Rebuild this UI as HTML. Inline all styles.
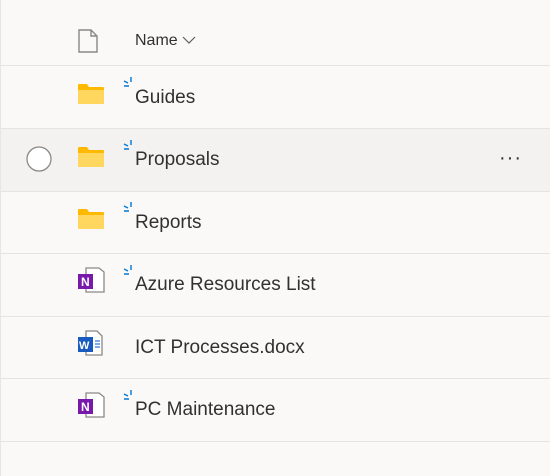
<!DOCTYPE html>
<html><head><style>
html,body{margin:0;padding:0;}
body{width:550px;height:476px;background:#faf9f8;font-family:"Liberation Sans",sans-serif;color:#323130;position:relative;overflow:hidden;border-left:1px solid #e8e6e4;box-sizing:border-box;}
.row{position:absolute;left:0;width:550px;height:62px;border-bottom:1px solid #e6e4e2;}
.t{position:absolute;left:134px;font-size:19px;line-height:20px;}
.ic{position:absolute;left:76px;}
.sp{position:absolute;left:122px;}
</style></head><body>
<div class="row" style="top:0;height:65px;">
 <svg class="ic" style="left:77px;top:29px" width="20" height="24" viewBox="0 0 20 24"><path d="M1 1H13L19 7V23H1Z M13 1V7H19" fill="none" stroke="#8a8886" stroke-width="1.4"/></svg>
 <div class="t" style="top:31px;font-size:16px;">Name <svg width="14" height="10" viewBox="0 0 14 10"><path d="M1 2L7 8L13 2" fill="none" stroke="#605e5c" stroke-width="1.2"/></svg></div>
</div>
<div class="row" style="top:66px;"></div>
<div class="row" style="top:129px;background:#f3f2f1;"></div>
<div class="row" style="top:191px;"></div>
<div class="row" style="top:254px;"></div>
<div class="row" style="top:316px;"></div>
<div class="row" style="top:379px;"></div>

<svg style="position:absolute;left:25px;top:146px" width="26" height="26"><circle cx="13" cy="13" r="12" fill="#fff" stroke="#8a8886" stroke-width="1.3"/></svg>
<div style="position:absolute;left:498px;top:147px;font-size:20px;letter-spacing:1px;">···</div>

<!-- folders -->
<svg class="ic" style="top:83px" width="28" height="22" viewBox="0 0 28 22"><path d="M1 2Q1 1 2 1H10L12 4H26Q27 4 27 5V20Q27 21 26 21H2Q1 21 1 20Z" fill="#ffb900"/><path d="M1 7H27V20Q27 21 26 21H2Q1 21 1 20Z" fill="#ffd75e"/></svg>
<svg class="ic" style="top:146px" width="28" height="22" viewBox="0 0 28 22"><path d="M1 2Q1 1 2 1H10L12 4H26Q27 4 27 5V20Q27 21 26 21H2Q1 21 1 20Z" fill="#ffb900"/><path d="M1 7H27V20Q27 21 26 21H2Q1 21 1 20Z" fill="#ffd75e"/></svg>
<svg class="ic" style="top:208px" width="28" height="22" viewBox="0 0 28 22"><path d="M1 2Q1 1 2 1H10L12 4H26Q27 4 27 5V20Q27 21 26 21H2Q1 21 1 20Z" fill="#ffb900"/><path d="M1 7H27V20Q27 21 26 21H2Q1 21 1 20Z" fill="#ffd75e"/></svg>

<!-- onenote -->
<svg class="ic" style="top:266px" width="30" height="28" viewBox="0 0 30 28"><path d="M9 2H22L27 6V26H9Z" fill="#fff" stroke="#8a8886" stroke-width="1.3"/><rect x="1" y="8" width="15" height="15" fill="#7719aa"/><text x="4" y="20" font-size="12" font-weight="bold" fill="#fff" font-family="Liberation Sans">N</text></svg>
<svg class="ic" style="top:391px" width="30" height="28" viewBox="0 0 30 28"><path d="M9 2H22L27 6V26H9Z" fill="#fff" stroke="#8a8886" stroke-width="1.3"/><rect x="1" y="8" width="15" height="15" fill="#7719aa"/><text x="4" y="20" font-size="12" font-weight="bold" fill="#fff" font-family="Liberation Sans">N</text></svg>
<!-- word -->
<svg class="ic" style="top:330px" width="30" height="28" viewBox="0 0 30 28"><path d="M9 1H20L25 6V25H9Z" fill="#fff" stroke="#8a8886" stroke-width="1.3"/><path d="M18 11H23M18 14H23M18 17H23" stroke="#2b7cd3" stroke-width="1.3"/><rect x="1" y="7" width="15" height="15" fill="#185abd"/><text x="2" y="19" font-size="11" font-weight="bold" fill="#fff" font-family="Liberation Sans">W</text></svg>

<!-- sparkles -->
<svg class="sp" style="top:76px" width="12" height="12"><path d="M8 1V6M1 5L5 7M1 10H6" stroke="#0078d4" stroke-width="1.4"/></svg>
<svg class="sp" style="top:139px" width="12" height="12"><path d="M8 1V6M1 5L5 7M1 10H6" stroke="#0078d4" stroke-width="1.4"/></svg>
<svg class="sp" style="top:201px" width="12" height="12"><path d="M8 1V6M1 5L5 7M1 10H6" stroke="#0078d4" stroke-width="1.4"/></svg>
<svg class="sp" style="top:264px" width="12" height="12"><path d="M8 1V6M1 5L5 7M1 10H6" stroke="#0078d4" stroke-width="1.4"/></svg>
<svg class="sp" style="top:389px" width="12" height="12"><path d="M8 1V6M1 5L5 7M1 10H6" stroke="#0078d4" stroke-width="1.4"/></svg>

<div class="t" style="top:88px">Guides</div>
<div class="t" style="top:150px">Proposals</div>
<div class="t" style="top:213px">Reports</div>
<div class="t" style="top:275px">Azure Resources List</div>
<div class="t" style="top:338px">ICT Processes.docx</div>
<div class="t" style="top:400px">PC Maintenance</div>
</body></html>
